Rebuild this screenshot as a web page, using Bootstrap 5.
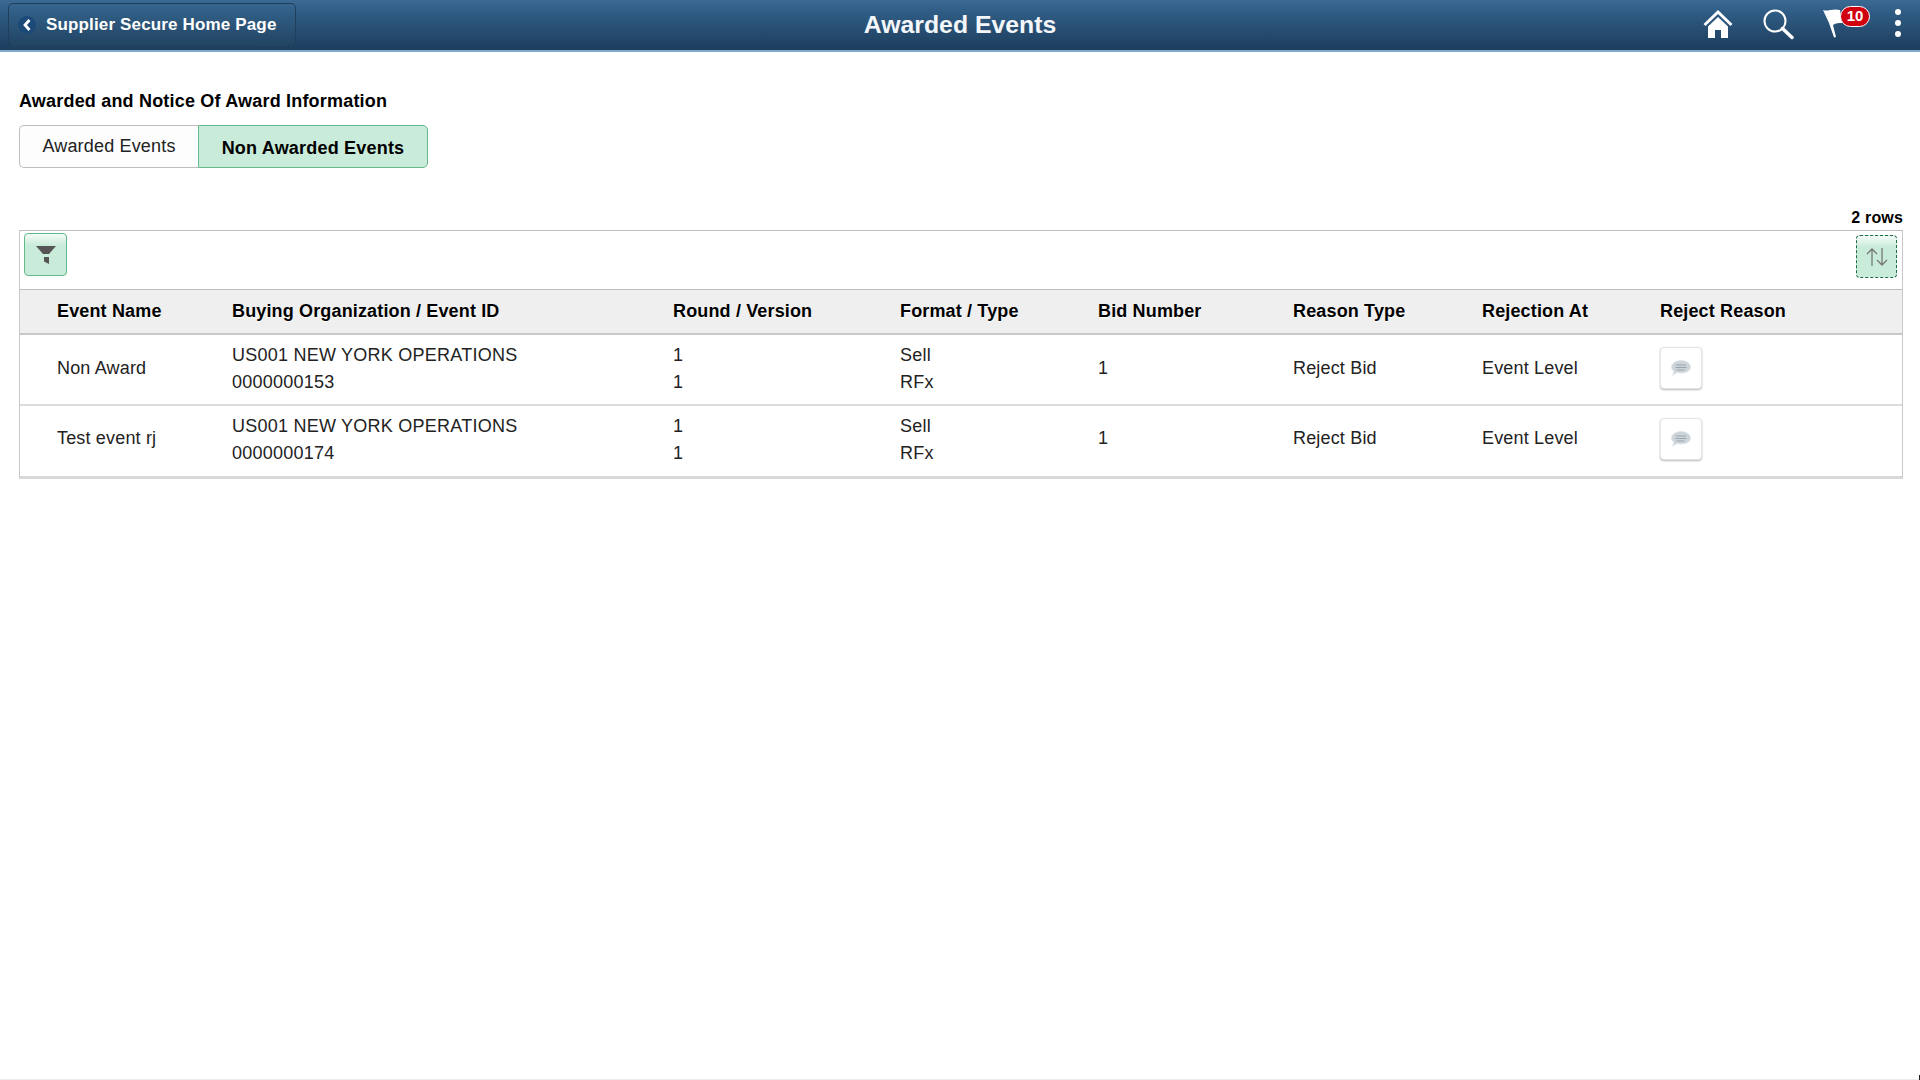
<!DOCTYPE html>
<html lang="en">
<head>
<meta charset="utf-8">
<title>Awarded Events</title>
<link href="https://cdn.jsdelivr.net/npm/bootstrap@5.3.0/dist/css/bootstrap.min.css" rel="stylesheet">
<style>
html,body{height:100%;}
body{font-family:"Liberation Sans",Arial,sans-serif;font-size:18px;color:#000;background:#fff;overflow:hidden;}
.top-bar{height:52px;background:linear-gradient(#3a6a93 0,#2f5c84 25%,#1d3d5c 100%);border-bottom:2px solid #7fa9cf;color:#fff;position:relative;}
.back-btn{margin:3px 0 0 8px;width:288px;height:43px;background:linear-gradient(#36658e,#214463);border:1px solid #1f3f5d;border-bottom-style:dotted;border-bottom-color:#10263a;border-radius:5px;color:#fff;font-weight:700;font-size:17px;padding:0 0 0 9px;gap:10px;letter-spacing:.15px;}
.back-disc{width:18px;height:18px;border-radius:50%;background:#1c4a78;}
.page-title{position:absolute;left:0;right:0;top:0;line-height:49px;text-align:center;font-size:24.8px;font-weight:700;color:#f4f7fa;pointer-events:none;}
.bar-icons{position:absolute;right:0;top:0;height:50px;}
.flag-count{position:absolute;left:17px;top:6px;width:30px;height:21px;line-height:18px;background:#d0000f;border:1.5px solid #fff;border-radius:10.5px;font-size:15px;font-weight:700;color:#fff;text-align:center;}
.section-head{font-size:18px;font-weight:700;margin:0;line-height:22px;padding-top:38px;padding-left:19px;letter-spacing:.19px;}
.seg-wrap{padding:13px 0 0 19px;}
.seg-btn{height:43px;border:1px solid #bdbdbd;background:#fdfdfd;font-size:18px;color:#222;line-height:40px;text-align:center;letter-spacing:.17px;}
.seg-left{width:179px;border-right:0;border-radius:5px 0 0 5px;}
.seg-right{width:230px;background:#c9ebd9;border-color:#63b98b;border-radius:0 5px 5px 0;font-weight:700;color:#000;line-height:44px;letter-spacing:.2px;}
.rows-note{font-size:16px;font-weight:700;text-align:right;padding:40px 17px 0 0;line-height:20px;letter-spacing:.16px;}
.grid-box{margin:2px 17px 0 19px;border:1px solid #bdbdbd;border-left-color:#c8c8c8;border-right-color:#c8c8c8;border-bottom:3px solid #d8d8d8;}
.grid-tools{height:58px;padding:2px 5px 0 4px;}
.tool-btn{width:43px;height:43px;border:1px solid #63b98b;border-radius:4px;background:linear-gradient(#f4fbf7 0,#c9ebd9 28%,#c9ebd9 100%);}
.tool-sort{width:41px;border:1px dashed #1f6b45;margin-top:2px;}
.ev-table{width:100%;table-layout:fixed;margin:0;border-collapse:collapse;font-size:18px;color:#222;letter-spacing:.17px;}
.ev-table th{background:#efefef;font-weight:700;color:#000;height:44px;padding:0;border-top:1px solid #bdbdbd;border-bottom:2px solid #c8c8c8;font-size:18px;white-space:nowrap;vertical-align:middle;text-shadow:0 1px 0 #fff;letter-spacing:.15px;}
.ev-table td{height:71px;padding:0 0 2px 0;border-bottom:2px solid #dcdcdc;vertical-align:middle;line-height:27px;background:#fff;}
.ev-table td.pair-cell{padding:0;letter-spacing:.24px;}
.ev-table tr:last-child td{border-bottom:0;padding-bottom:4px;}
.ev-table tr:last-child td.pair-cell{padding-bottom:2px;}
.ev-table .first-col{padding-left:37px;}
.note-btn{width:42px;height:42px;background:#fff;border:1px solid #e4e4e4;border-radius:4px;box-shadow:0 1px 2px rgba(0,0,0,.28);}
.page-foot{height:1px;background:#ececec;position:relative;}
.foot-tick{position:absolute;right:0;bottom:0;width:1px;height:5px;background:#222;}
</style>
</head>
<body class="d-flex flex-column">
<header class="top-bar flex-shrink-0">
  <div class="back-btn d-flex align-items-center">
    <span class="back-disc d-flex align-items-center justify-content-center">
      <svg width="10" height="12" viewBox="0 0 10 12"><path d="M7.500 1 3 6l4.500 5" fill="none" stroke="#fff" stroke-width="2.800"/></svg>
    </span>
    <span>Supplier Secure Home Page</span>
  </div>
  <div class="page-title">Awarded Events</div>
  <div class="bar-icons d-flex align-items-start">
    <svg class="d-block" style="margin:9px 0 0 0" width="30" height="30" viewBox="0 0 30 30">
      <path d="M15 1 0.5 15l2 2L15 5l12.500 12 2-2z" fill="#fff"/>
      <path d="M5 17.500 15 8l10 9.500V29H18v-8h-6v8H5z" fill="#fff"/>
    </svg>
    <svg class="d-block" style="margin:8px 0 0 29px" width="32" height="32" viewBox="0 0 32 32">
      <circle cx="13" cy="13" r="10.500" fill="none" stroke="#fff" stroke-width="2"/>
      <path d="M20.500 20.500 30 29.500" stroke="#fff" stroke-width="3.500" stroke-linecap="round"/>
    </svg>
    <div class="position-relative" style="width:47px;height:50px;margin-left:29px">
      <svg class="d-block position-absolute top-0 start-0" width="22" height="30" viewBox="0 0 22 30" style="margin-top:8px">
        <path d="M0 2C5 4 9 0 17 2l2 13c-3 0-6 0-9 2l3 12-2 .5L6 15z" fill="#fff"/>
      </svg>
      <span class="flag-count">10</span>
    </div>
    <svg class="d-block" style="margin:8px 17px 0 23px" width="10" height="30" viewBox="0 0 10 30">
      <circle cx="5" cy="4" r="3" fill="#fff"/><circle cx="5" cy="15" r="3" fill="#fff"/><circle cx="5" cy="26" r="3" fill="#fff"/>
    </svg>
  </div>
</header>

<main class="flex-grow-1">
  <h2 class="section-head">Awarded and Notice Of Award Information</h2>
  <div class="seg-wrap d-flex">
    <div class="seg-btn seg-left">Awarded Events</div>
    <div class="seg-btn seg-right">Non Awarded Events</div>
  </div>
  <div class="rows-note">2 rows</div>
  <div class="grid-box">
    <div class="grid-tools d-flex justify-content-between align-items-start">
      <div class="tool-btn d-flex align-items-center justify-content-center">
        <svg width="20" height="18" viewBox="0 0 20 18"><path d="M0 0h20l-7 8H7z" fill="#555"/><path d="M8 11h5v7l-5-2.500z" fill="#555"/></svg>
      </div>
      <div class="tool-btn tool-sort d-flex align-items-center justify-content-center">
        <svg width="22" height="20" viewBox="0 0 22 20"><path d="M6 19V2M1 7l5-5 5 5" fill="none" stroke="#777" stroke-width="1.300"/><path d="M16 1v17M11 13l5 5 5-5" fill="none" stroke="#777" stroke-width="1.300"/></svg>
      </div>
    </div>
    <table class="ev-table">
      <colgroup>
        <col style="width:212px"><col style="width:441px"><col style="width:227px"><col style="width:198px"><col style="width:195px"><col style="width:189px"><col style="width:178px"><col>
      </colgroup>
      <thead>
        <tr><th class="first-col">Event Name</th><th>Buying Organization / Event ID</th><th>Round / Version</th><th>Format / Type</th><th>Bid Number</th><th>Reason Type</th><th>Rejection At</th><th>Reject Reason</th></tr>
      </thead>
      <tbody>
        <tr>
          <td class="first-col">Non Award</td>
          <td class="pair-cell">US001 NEW YORK OPERATIONS<br>0000000153</td>
          <td class="pair-cell">1<br>1</td>
          <td class="pair-cell">Sell<br>RFx</td>
          <td>1</td>
          <td>Reject Bid</td>
          <td>Event Level</td>
          <td><div class="note-btn d-flex align-items-center justify-content-center"><svg width="22" height="18" viewBox="0 0 22 18"><path d="M11 1.500c5 0 9.500 2.500 9.500 6.500s-4.500 6-9.500 6c-1.500 0-2.500 0-4-.5L2.500 16.500 4 12C2 11 1.500 9.500 1.500 8c0-4 4.500-6.500 9.500-6.500z" fill="#cdd5da" stroke="#e4e8ea" stroke-dasharray="2 1"/><path d="M6 6h10M5.500 8.500h11M6.500 11h8" stroke="#98a5ad" stroke-width="1"/></svg></div></td>
        </tr>
        <tr>
          <td class="first-col">Test event rj</td>
          <td class="pair-cell">US001 NEW YORK OPERATIONS<br>0000000174</td>
          <td class="pair-cell">1<br>1</td>
          <td class="pair-cell">Sell<br>RFx</td>
          <td>1</td>
          <td>Reject Bid</td>
          <td>Event Level</td>
          <td><div class="note-btn d-flex align-items-center justify-content-center"><svg width="22" height="18" viewBox="0 0 22 18"><path d="M11 1.500c5 0 9.500 2.500 9.500 6.500s-4.500 6-9.500 6c-1.500 0-2.500 0-4-.5L2.500 16.500 4 12C2 11 1.500 9.500 1.500 8c0-4 4.500-6.500 9.500-6.500z" fill="#cdd5da" stroke="#e4e8ea" stroke-dasharray="2 1"/><path d="M6 6h10M5.500 8.500h11M6.500 11h8" stroke="#98a5ad" stroke-width="1"/></svg></div></td>
        </tr>
      </tbody>
    </table>
  </div>
</main>
<footer class="page-foot flex-shrink-0"><span class="foot-tick"></span></footer>
<script src="https://cdn.jsdelivr.net/npm/bootstrap@5.3.0/dist/js/bootstrap.bundle.min.js"></script>
</body>
</html>
